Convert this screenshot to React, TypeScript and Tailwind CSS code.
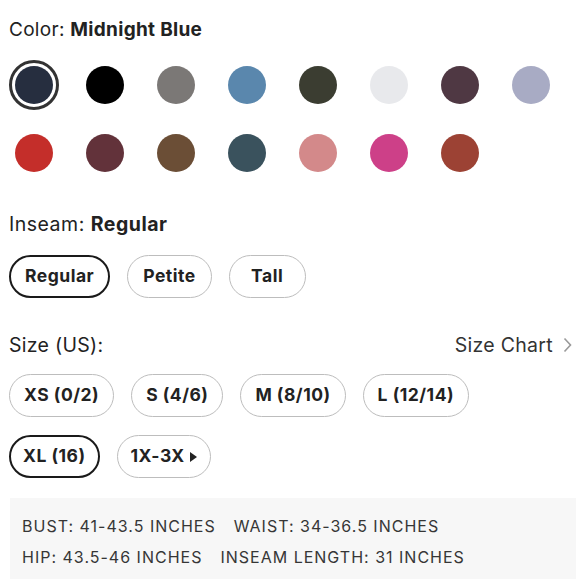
import { useState } from "react";

const swatches = [
  "#262e3f",
  "#000000",
  "#7b7876",
  "#5a87ad",
  "#3b3d31",
  "#e8e9ec",
  "#4f3843",
  "#a8abc4",
  "#c42e2a",
  "#62323a",
  "#6b4e36",
  "#3a525d",
  "#d3898a",
  "#cd4088",
  "#9c4234",
];

const inseams = ["Regular", "Petite", "Tall"];
const sizes = ["XS (0/2)", "S (4/6)", "M (8/10)", "L (12/14)", "XL (16)"];

export default function App() {
  const [color, setColor] = useState(0);
  const [inseam, setInseam] = useState("Regular");
  const [size, setSize] = useState("XL (16)");

  return (
    <div className="w-[580px] h-[580px] overflow-hidden bg-white pl-[9px] pr-[4px] pt-[18px] font-['Inter',sans-serif] text-[#222]">
      <div className="text-[19px] leading-6 tracking-[0.3px]">
        Color: <span className="font-bold">Midnight Blue</span>
      </div>

      {/* swatches */}
      <div className="mt-[18px] grid grid-cols-[repeat(8,50px)] gap-x-[21px] gap-y-[18px]">
        {swatches.map((c, i) => (
          <button
            key={i}
            onClick={() => setColor(i)}
            className={
              "w-[50px] h-[50px] rounded-full flex items-center justify-center " +
              (color === i ? "border-[3px] border-[#333]" : "")
            }
          >
            <span
              className="block w-[38px] h-[38px] rounded-full"
              style={{ backgroundColor: c }}
            />
          </button>
        ))}
      </div>

      <div className="mt-[34px] text-[19.5px] leading-6 tracking-[0.5px]">
        Inseam: <span className="font-bold">Regular</span>
      </div>
      <div className="mt-[19px] flex gap-[17px]">
        {inseams.map((s) => (
          <button
            key={s}
            onClick={() => setInseam(s)}
            className={
              "h-[43px] min-w-[77px] rounded-full text-[17.5px] font-bold tracking-[0.5px] " +
              (inseam === s
                ? "border-2 border-[#1a1a1a] px-[14px]"
                : "border border-[#bdbdbd] px-[15px]")
            }
          >
            {s}
          </button>
        ))}
      </div>

      <div className="mt-[35px] flex items-center justify-between pr-[4px] text-[19.5px] leading-6 tracking-[0.3px]">
        <span>Size (US):</span>
        <span className="flex items-center gap-[10px] text-[#333]">
          Size Chart
          <svg width="9" height="16" viewBox="0 0 9 16" fill="none">
            <path d="M1.5 1.5l6 6.5-6 6.5" stroke="#9a9a9a" strokeWidth="1.6" />
          </svg>
        </span>
      </div>

      <div className="mt-[17px] flex flex-wrap gap-x-[17px] gap-y-[18px] w-[500px]">
        {sizes.map((s) => (
          <button
            key={s}
            onClick={() => setSize(s)}
            className={
              "h-[43px] rounded-full text-[17.5px] font-bold tracking-[0.5px] " +
              (size === s
                ? "border-2 border-[#1a1a1a] px-[12px]"
                : "border border-[#bdbdbd] px-[14px]")
            }
          >
            {s}
          </button>
        ))}
        <button className="h-[43px] rounded-full border border-[#bdbdbd] px-[13px] text-[17.5px] font-bold tracking-[0.5px] flex items-center gap-[5px]">
          1X-3X
          <svg width="7" height="10" viewBox="0 0 7 10">
            <path d="M0 0l7 5-7 5z" fill="#222" />
          </svg>
        </button>
      </div>

      <div className="mt-[20px] ml-[1px] bg-[#f7f7f7] px-[12px] pt-[13px] pb-[6px] text-[16px] text-[#363636] leading-[31px] tracking-[1px]">
        <div className="flex gap-[18px]">
          <span>BUST: 41-43.5 INCHES</span>
          <span>WAIST: 34-36.5 INCHES</span>
        </div>
        <div className="flex gap-[18px]">
          <span>HIP: 43.5-46 INCHES</span>
          <span>INSEAM LENGTH: 31 INCHES</span>
        </div>
      </div>
    </div>
  );
}
